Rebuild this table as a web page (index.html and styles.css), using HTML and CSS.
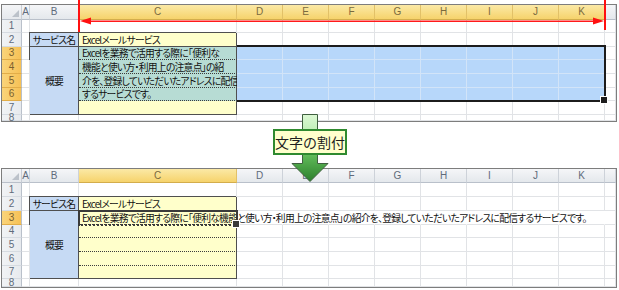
FILE: index.html
```html
<!DOCTYPE html>
<html lang="ja">
<head>
<meta charset="utf-8">
<title>文字の割付</title>
<link rel="stylesheet" href="styles.css">
</head>
<body>
<div class="page">
  <section class="sheet sheet-top">
    <div class="grid">
      <div class="corner"><span class="tri"></span></div><div class="ch">A</div><div class="ch">B</div><div class="ch on">C</div><div class="ch on">D</div><div class="ch on">E</div><div class="ch on">F</div><div class="ch on">G</div><div class="ch on">H</div><div class="ch on">I</div><div class="ch on">J</div><div class="ch on">K</div><div class="ch"></div>
      <div class="rh">1</div><div></div><div></div><div></div><div></div><div></div><div></div><div></div><div></div><div></div><div></div><div></div><div></div>
      <div class="rh">2</div><div></div><div class="lbl">サービス名</div><div class="val">Excelメールサービス</div><div></div><div></div><div></div><div></div><div></div><div></div><div></div><div></div><div></div>
      <div class="rh on">3</div><div></div><div class="lbl merged">概要</div><div class="val hlc dot">Excelを業務で活用する際に「便利な</div><div class="hl"></div><div class="hl"></div><div class="hl"></div><div class="hl"></div><div class="hl"></div><div class="hl"></div><div class="hl"></div><div class="hl"></div><div></div>
      <div class="rh on">4</div><div></div><div class="val hlc dot cont">機能と使い方・利用上の注意点」の紹</div><div class="hl"></div><div class="hl"></div><div class="hl"></div><div class="hl"></div><div class="hl"></div><div class="hl"></div><div class="hl"></div><div class="hl"></div><div></div>
      <div class="rh on">5</div><div></div><div class="val hlc dot cont">介を、登録していただいたアドレスに配信</div><div class="hl"></div><div class="hl"></div><div class="hl"></div><div class="hl"></div><div class="hl"></div><div class="hl"></div><div class="hl"></div><div class="hl"></div><div></div>
      <div class="rh on">6</div><div></div><div class="val hlc dot cont">するサービスです。</div><div class="hl"></div><div class="hl"></div><div class="hl"></div><div class="hl"></div><div class="hl"></div><div class="hl"></div><div class="hl"></div><div class="hl"></div><div></div>
      <div class="rh">7</div><div></div><div class="val cont"></div><div></div><div></div><div></div><div></div><div></div><div></div><div></div><div></div><div></div>
      <div class="rh">8</div><div></div><div></div><div></div><div></div><div></div><div></div><div></div><div></div><div></div><div></div><div></div><div></div>
      <span class="selbox"></span>
    </div>
  </section>

  <section class="sheet sheet-bottom">
    <div class="grid">
      <div class="corner"><span class="tri"></span></div><div class="ch">A</div><div class="ch">B</div><div class="ch on">C</div><div class="ch">D</div><div class="ch">E</div><div class="ch">F</div><div class="ch">G</div><div class="ch">H</div><div class="ch">I</div><div class="ch">J</div><div class="ch">K</div><div class="ch"></div>
      <div class="rh">1</div><div></div><div></div><div></div><div></div><div></div><div></div><div></div><div></div><div></div><div></div><div></div><div></div>
      <div class="rh">2</div><div></div><div class="lbl">サービス名</div><div class="val">Excelメールサービス</div><div></div><div></div><div></div><div></div><div></div><div></div><div></div><div></div><div></div>
      <div class="rh on">3</div><div></div><div class="lbl merged">概要</div><div class="val dot">Excelを業務で活用する際に「便利な機能と使い方・利用上の注意点」の紹介を、登録していただいたアドレスに配信するサービスです。</div><div class="ov"></div><div class="ov"></div><div class="ov"></div><div class="ov"></div><div class="ov"></div><div class="ov"></div><div class="ov"></div><div class="ov"></div><div></div>
      <div class="rh">4</div><div></div><div class="val dot cont"></div><div></div><div></div><div></div><div></div><div></div><div></div><div></div><div></div><div></div>
      <div class="rh">5</div><div></div><div class="val dot cont"></div><div></div><div></div><div></div><div></div><div></div><div></div><div></div><div></div><div></div>
      <div class="rh">6</div><div></div><div class="val dot cont"></div><div></div><div></div><div></div><div></div><div></div><div></div><div></div><div></div><div></div>
      <div class="rh">7</div><div></div><div class="val cont"></div><div></div><div></div><div></div><div></div><div></div><div></div><div></div><div></div><div></div>
      <div class="rh">8</div><div></div><div></div><div></div><div></div><div></div><div></div><div></div><div></div><div></div><div></div><div></div><div></div>
      <span class="active"></span>
    </div>
  </section>

  <svg class="span-arrow" width="619" height="36" viewBox="0 0 619 36" aria-hidden="true">
    <rect x="78" y="0" width="2" height="32" fill="#ff1010"/>
    <rect x="604" y="0" width="2" height="30" fill="#ff1010"/>
    <rect x="88" y="20.5" width="508" height="1.5" fill="#ff1a1a"/>
    <polygon points="80,21 91,17.5 91,24.5" fill="#ff1010"/>
    <polygon points="604,21 593,17.5 593,24.5" fill="#ff1010"/>
  </svg>

  <svg class="down-arrow" width="44" height="72" viewBox="0 0 44 72" aria-hidden="true">
    <defs>
      <linearGradient id="ag" x1="0" y1="0" x2="0" y2="1">
        <stop offset="0" stop-color="#dcf8d4"/>
        <stop offset="0.35" stop-color="#b4ebab"/>
        <stop offset="0.62" stop-color="#5fb958"/>
        <stop offset="1" stop-color="#2c7f2c"/>
      </linearGradient>
    </defs>
    <path d="M14.5,2.5 H29.5 V51.5 H40 L22,69.5 L4,51.5 H14.5 Z" fill="url(#ag)" stroke="#3f5f3f" stroke-width="1"/>
  </svg>
  <div class="tag">文字の割付</div>
</div>
</body>
</html>
```

FILE: styles.css
```css
* { box-sizing: border-box; }
html, body { margin: 0; padding: 0; background: #fff; }
body {
  width: 619px;
  height: 290px;
  overflow: hidden;
  font-family: "Noto Sans CJK JP", "Liberation Sans", sans-serif;
  color: #111;
}
.page {
  position: relative;
  width: 619px;
  height: 290px;
  padding-top: 4px;
}
.sheet {
  margin-left: 1px;
  width: 616px;
  border: 1px solid #7d7d7d;
  background: #fff;
  overflow: hidden;
}
.sheet-bottom { margin-top: 46px; }

.grid {
  position: relative;
  display: grid;
  grid-template-columns: 20px 8px 49px 158px repeat(8, 46px) 11px;
}
.sheet-top .grid { grid-template-rows: 15px 13px 14px 13px 14px 14px 13px 14px 6px; }
.sheet-bottom .grid { grid-template-rows: 14px 14px 14px 14px 13px 14px 14px 13px 8px; }

.grid > div {
  min-width: 0;
  border-right: 1px solid #e1e3e6;
  border-bottom: 1px solid #e1e3e6;
  font-size: 9.8px;
  letter-spacing: -0.75px;
  line-height: 12px;
  white-space: nowrap;
  font-feature-settings: "palt";
  display: flex;
  align-items: center;
}

/* headers */
.grid > .corner {
  background: linear-gradient(#f4f5f7, #e6e9ed);
  border-right-color: #c9ced6;
  border-bottom-color: #b9c0ca;
  justify-content: flex-end;
  align-items: flex-end;
  padding: 0 2px 2px 0;
}
.tri {
  display: block;
  width: 7px;
  height: 7px;
  background: #bcc2ca;
  clip-path: polygon(100% 0, 100% 100%, 0 100%);
}
.grid > .ch {
  justify-content: center;
  font-family: "Liberation Sans", sans-serif;
  font-size: 10px;
  letter-spacing: 0;
  color: #5f6b7b;
  background: linear-gradient(#f5f6f8, #e4e8ec);
  border-right-color: #cdd2d9;
  border-bottom-color: #b9c0ca;
}
.grid > .ch.on {
  color: #7a6a3e;
  background: linear-gradient(#fbe9a6, #f6d36c);
  border-right-color: #e2c168;
  border-bottom-color: #d3ad4c;
}
.grid > .rh {
  justify-content: center;
  font-family: "Liberation Sans", sans-serif;
  font-size: 10px;
  letter-spacing: 0;
  color: #5f6b7b;
  background: linear-gradient(90deg, #f1f3f5, #e7eaee);
  border-right-color: #b9c0ca;
  border-bottom-color: #d6dbe1;
}
.grid > .rh.on {
  color: #7a5f2e;
  background: linear-gradient(90deg, #fad47a, #f6c156);
  border-bottom-color: #e2ad48;
}

/* data cells */
.grid > .lbl {
  justify-content: center;
  background: #c6daf4;
  border-right-color: #4f4f4f;
  border-bottom-color: #4f4f4f;
  box-shadow: -1px -1px 0 #4f4f4f;
}
.grid > .merged { grid-row: span 5; }
.grid > .val {
  padding-left: 3px;
  background: #ffffcb;
  border-right-color: #4f4f4f;
  border-bottom-color: #4f4f4f;
  box-shadow: -1px -1px 0 #4f4f4f;
}
.grid > .val.cont { box-shadow: -1px 0 0 #4f4f4f; }
.grid > .val.dot { border-bottom: 1px dotted #3c3c3c; }
.grid > .val.hlc { background: #b7dcd4; }
.grid > .hl {
  background: #b7d7fa;
  border-right-color: #d2e4f8;
  border-bottom-color: #d2e4f8;
}
.grid > .ov { border-right-color: transparent; }

/* selection overlays */
.selbox {
  position: absolute;
  grid-column: 5 / 13;
  grid-row: 4 / 8;
  top: -2px;
  left: 0;
  right: -1px;
  bottom: -1px;
  border: 2px solid #1c1c1c;
  border-left: 0;
}
.selbox::after {
  content: "";
  position: absolute;
  right: -4px;
  bottom: -4px;
  width: 6px;
  height: 6px;
  background: #1c1c1c;
  border: 1px solid #fff;
}
.active {
  position: absolute;
  grid-column: 4 / 5;
  grid-row: 4 / 5;
  top: -1px;
  left: -1px;
  right: -1px;
  bottom: -1px;
  border: 2px solid #3a3a3a;
  border-bottom-style: dotted;
}
.active::after {
  content: "";
  position: absolute;
  right: -4px;
  bottom: -4px;
  width: 6px;
  height: 6px;
  background: #3a3a3a;
  border: 1px solid #fff;
}

/* annotations */
.span-arrow {
  position: absolute;
  left: 0;
  top: 0;
  z-index: 3;
}
.down-arrow {
  position: absolute;
  left: 288px;
  top: 112px;
  z-index: 4;
}
.tag {
  position: absolute;
  left: 273px;
  top: 129px;
  width: 74px;
  height: 26px;
  z-index: 5;
  border: 2px solid #2f8a2f;
  background: #ffffcc;
  display: flex;
  align-items: center;
  justify-content: center;
  font-size: 14px;
  line-height: 1;
  color: #1e1e1e;
  white-space: nowrap;
}
```
